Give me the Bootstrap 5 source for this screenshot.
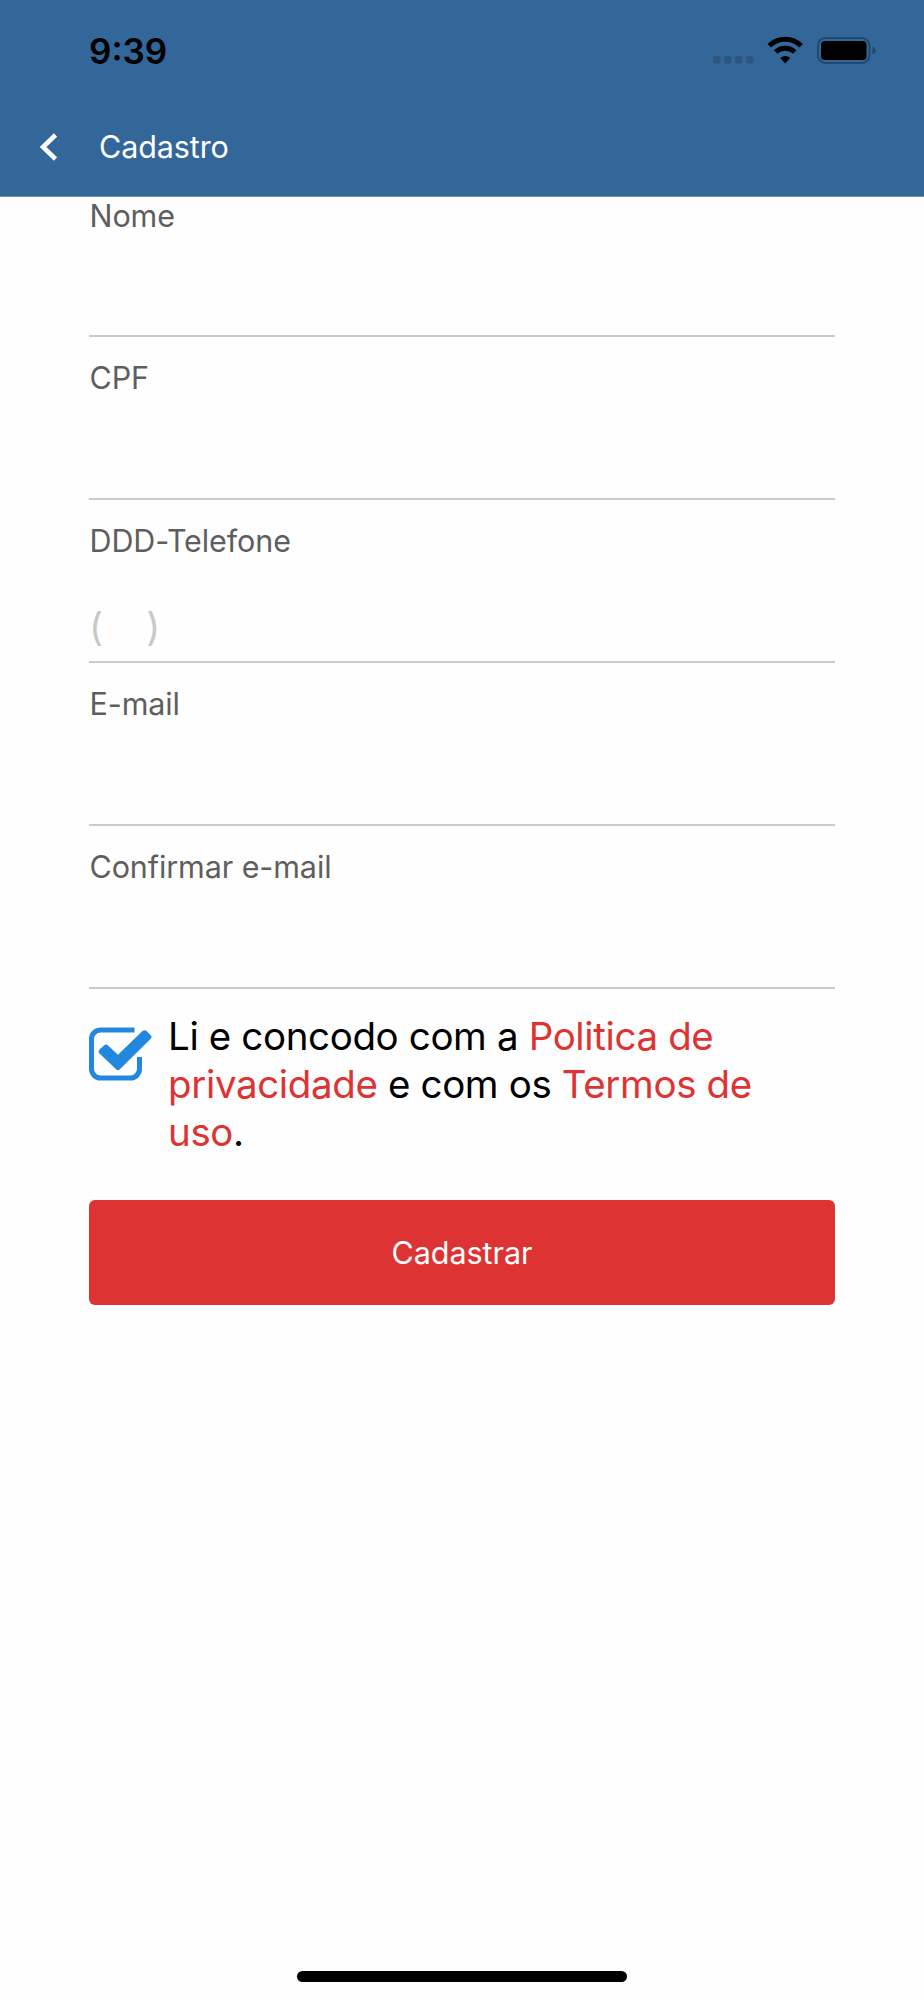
<!DOCTYPE html>
<html lang="pt-BR">
<head>
<meta charset="utf-8">
<meta name="viewport" content="width=device-width, initial-scale=1">
<title>Cadastro</title>
<link href="https://cdn.jsdelivr.net/npm/bootstrap@5.3.0/dist/css/bootstrap.min.css" rel="stylesheet">
<style>
body{font-family:Inter,"Liberation Sans",sans-serif;background:#fefefe;color:#000}
.screen{height:2000px}
.app-header{background:#336699;height:197px;border-bottom:1px solid #7096ba}
.status-bar{height:102px;padding:0 48px 0 89px}
.status-icons{margin-top:34px}
.clock{font-size:35px;font-weight:600;line-height:102px}
.title-bar{height:90px;padding-left:40px}
.page-title{font-size:30.5px;line-height:90px;color:#fff;margin-left:41px;letter-spacing:-.1px}
.form-area{padding:0 89px}
.field{height:163px;border-bottom:2px solid #cbcbcb}
.field.first{height:140px}
.field label{font-size:30.5px;line-height:40px;color:#5e5e5e;margin-top:21px;padding-left:.5px;letter-spacing:-.1px}
.field.first label{margin-top:-1px}
.field input{border:0;background:transparent;font-size:38.5px;line-height:46px;height:60px;padding:0;border-radius:0;box-shadow:none;margin-bottom:4px}
.field input::placeholder{color:#c8c8c8;opacity:1}
.terms{margin-top:24px}
.terms svg{margin:14px 15px 0 0}
.terms p{font-size:38.5px;line-height:47.8px;letter-spacing:-.37px}
.terms a{color:#dd3333}
.submit,.submit:hover{background:#dd3333;color:#fff}
.submit{border-radius:6px;height:105px;border:0;margin-top:44px;font-size:30.5px;letter-spacing:-.05px}
.home-bar{width:330px;height:11px;border-radius:6px;background:#000;margin-bottom:18px}
</style>
</head>
<body>
<div class="screen d-flex flex-column overflow-hidden">
  <header class="app-header flex-shrink-0">
    <div class="status-bar d-flex justify-content-between">
      <span class="clock">9:39</span>
      <svg width="165" height="32" viewBox="0 0 165 32" class="status-icons">
        <g fill="#2a5681"><rect x="2" y="22" width="7.500" height="7.500" rx="2"/><rect x="13" y="22" width="7.500" height="7.500" rx="2"/><rect x="24" y="22" width="7.500" height="7.500" rx="2"/><rect x="35" y="22" width="7.500" height="7.500" rx="2"/></g>
        <g fill="none" stroke="#000" stroke-width="5"><path d="M58.300 11.800a22.500 22.500 0 0 1 31.800 0"/><path d="M64.700 18a13.800 13.800 0 0 1 19 0"/></g>
        <path d="M69.200 24q5-4 10 0l-5 5.500z"/>
        <rect x="107" y="4" width="51.500" height="25" rx="7.500" fill="none" stroke="#24496f" stroke-width="2"/>
        <rect x="110" y="7" width="45.500" height="19" rx="4"/>
        <path d="M161.500 12.500q3 1.200 3 4t-3 4z" fill="#24496f"/>
      </svg>
    </div>
    <div class="title-bar d-flex align-items-center">
      <svg width="18" height="28" viewBox="0 0 18 28"><path d="M15.500 2 3 14l12.500 12" fill="none" stroke="#fff" stroke-width="4.600"/></svg>
      <h1 class="page-title mb-0 fw-normal">Cadastro</h1>
    </div>
  </header>
  <form class="form-area flex-grow-1">
    <div class="field first d-flex flex-column justify-content-between"><label for="nome">Nome</label><input class="form-control" id="nome"></div>
    <div class="field d-flex flex-column justify-content-between"><label for="cpf">CPF</label><input class="form-control" id="cpf"></div>
    <div class="field d-flex flex-column justify-content-between"><label for="tel">DDD-Telefone</label><input class="form-control" id="tel" placeholder="(&nbsp;&nbsp;&nbsp;&nbsp;)"></div>
    <div class="field d-flex flex-column justify-content-between"><label for="email">E-mail</label><input class="form-control" id="email"></div>
    <div class="field d-flex flex-column justify-content-between"><label for="email2">Confirmar e-mail</label><input class="form-control" id="email2"></div>
    <div class="terms d-flex align-items-start">
      <svg class="flex-shrink-0" width="64" height="54" viewBox="0 0 64 54">
        <path d="M45.500 3H11.500a9 9 0 0 0-9 9v30a9 9 0 0 0 9 9h30a9 9 0 0 0 9-9V30" fill="none" stroke="#2188dd" stroke-width="5"/>
        <path d="M14.500 23.500 29 37 57.500 8.500" fill="none" stroke="#fefefe" stroke-width="15"/>
        <path d="M10.500 22.500 15 18.500q2-1.800 4 0l10 9.300L53.500 4q2-1.700 4 0l4 4q2 2 0 4L30.800 42.300q-1.800 1.700-3.600 0L10.500 26.500q-1.700-2 0-4z" fill="#2188dd"/>
      </svg>
      <p class="mb-0">Li e concodo com a <a href="#" class="text-decoration-none">Politica de</a><br><a href="#" class="text-decoration-none">privacidade</a> e com os <a href="#" class="text-decoration-none">Termos de</a><br><a href="#" class="text-decoration-none">uso</a>.</p>
    </div>
    <button type="button" class="btn submit w-100">Cadastrar</button>
  </form>
  <div class="home-bar mx-auto flex-shrink-0"></div>
</div>
<script src="https://cdn.jsdelivr.net/npm/bootstrap@5.3.0/dist/js/bootstrap.bundle.min.js"></script>
</body>
</html>
